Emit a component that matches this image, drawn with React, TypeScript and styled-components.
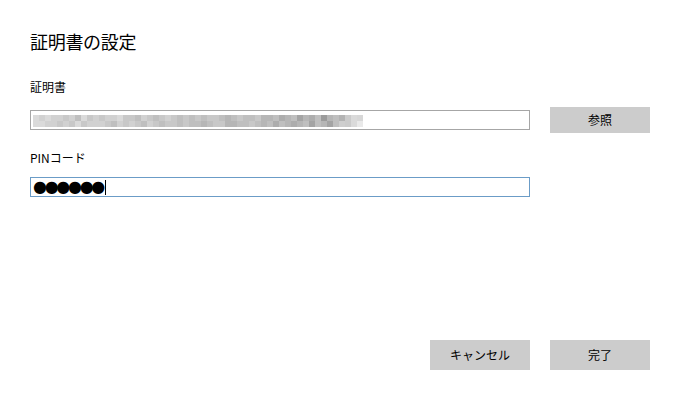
import React from "react";
import styled, { createGlobalStyle } from "styled-components";

const Global = createGlobalStyle`
  html, body { margin: 0; padding: 0; background: #ffffff; }
  body { font-family: "Noto Sans CJK JP", "Noto Sans", sans-serif; color: #000; }
`;

const Page = styled.div`
  width: 680px;
  height: 400px;
  box-sizing: border-box;
  padding: 29px 30px 30px 30px;
  display: flex;
  flex-direction: column;
`;

const Title = styled.h1`
  margin: 0;
  font-size: 18px;
  font-weight: 400;
  line-height: 24px;
  letter-spacing: -0.3px;
`;

const Label = styled.div<{ $top: number }>`
  margin-top: ${(p) => p.$top}px;
  font-size: 12px;
  line-height: 16px;
`;

const Row = styled.div<{ $top: number }>`
  margin-top: ${(p) => p.$top}px;
  display: flex;
  align-items: center;
  gap: 20px;
`;

const Field = styled.div<{ $focused?: boolean }>`
  width: 500px;
  height: 20px;
  box-sizing: border-box;
  border: 1px solid ${(p) => (p.$focused ? "#6b9cc7" : "#a6a6a6")};
  background: #fff;
  display: flex;
  align-items: center;
  padding-left: 2px;
  overflow: hidden;
`;

const Mosaic = styled.div`
  display: grid;
  grid-template-columns: repeat(55, 6px);
  grid-auto-rows: 6px;
  margin-top: 1px;
`;

const Cell = styled.span``;

const Dots = styled.span`
  font-family: "DejaVu Sans", sans-serif;
  font-size: 16px;
  line-height: 16px;
  letter-spacing: -2.3px;
`;

const Caret = styled.span`
  display: inline-block;
  width: 1px;
  height: 15px;
  background: #000;
  margin-left: 2px;
`;

const Button = styled.button<{ $h: number }>`
  width: 100px;
  height: ${(p) => p.$h}px;
  border: none;
  background: #cccccc;
  font-family: "Noto Sans CJK JP", "Noto Sans", sans-serif;
  font-size: 12px;
  line-height: 16px;
  color: #000;
  padding: 0;
  margin: 0;
`;

const Spacer = styled.div`
  flex: 1;
`;

const Footer = styled.div`
  display: flex;
  justify-content: flex-end;
  gap: 20px;
`;

const row1 = "ededdcdbecdcddeccbdcbcdcbcbcbccbabcbbcaab9ab8a9b7ab9bcbdcdcde";
const row2 = "eeddcdcecdddcbdcdcbdcbccbcbbabccaabbcbab9ba9ab8ba8bcbcdccddee";

function gray(ch: string, i: number) {
  const d = parseInt(ch, 16);
  const fade = i > 50 ? (i - 50) * 6 : 0;
  const v = Math.min(255, 92 + d * 9 + fade);
  return `rgb(${v},${v},${v})`;
}

const cells: string[] = [];
[row1, row2].forEach((r) => {
  for (let i = 0; i < 55; i++) cells.push(gray(r[i % r.length], i));
});

export default function App() {
  return (
    <>
      <Global />
      <Page>
        <Title>証明書の設定</Title>
        <Label $top={26}>証明書</Label>
        <Row $top={12}>
          <Field>
            <Mosaic>
              {cells.map((c, i) => (
                <Cell key={i} style={{ background: c }} />
              ))}
            </Mosaic>
          </Field>
          <Button $h={26}>参照</Button>
        </Row>
        <Label $top={17}>PINコード</Label>
        <Row $top={11}>
          <Field $focused>
            <Dots>●●●●●●</Dots>
            <Caret />
          </Field>
        </Row>
        <Spacer />
        <Footer>
          <Button $h={30}>キャンセル</Button>
          <Button $h={30}>完了</Button>
        </Footer>
      </Page>
    </>
  );
}
